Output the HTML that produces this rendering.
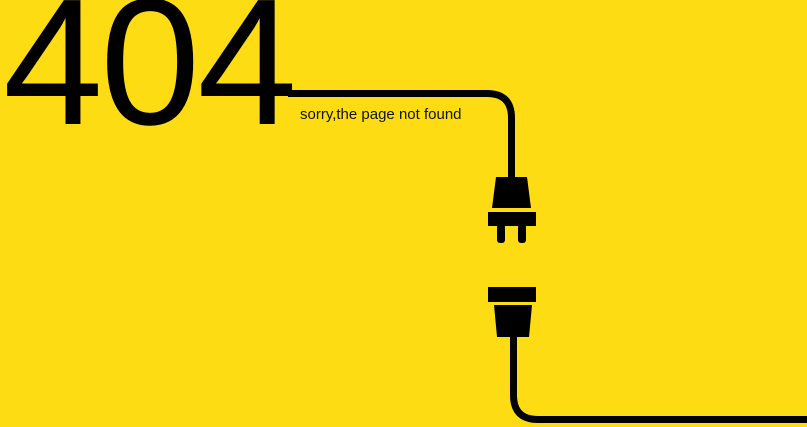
<!DOCTYPE html>
<html><head><style>
html,body{margin:0;padding:0;width:807px;height:427px;overflow:hidden;background:#FEDC14;}
.big{position:absolute;left:3px;top:-27px;font-family:"Liberation Sans",sans-serif;font-size:180px;line-height:1;color:#000;letter-spacing:-3px;}
.msg{position:absolute;left:300px;top:107px;font-family:"Liberation Sans",sans-serif;font-size:15px;line-height:1;color:#111;}
svg{position:absolute;left:0;top:0;}
</style></head><body>
<svg width="807" height="427" viewBox="0 0 807 427">
<path d="M288 93.5 H487 Q511.5 93.5 511.5 118 V180" fill="none" stroke="#000" stroke-width="7"/>
<polygon points="496,177 527,177 531,208 492,208" fill="#000"/>
<rect x="488" y="212" width="48" height="14" fill="#000"/>
<rect x="497" y="224" width="8" height="19" rx="3" fill="#000"/>
<rect x="518" y="224" width="8" height="19" rx="3" fill="#000"/>
<rect x="488" y="287" width="48" height="15" fill="#000"/>
<polygon points="494,305 532,305 529,337 497,337" fill="#000"/>
<path d="M513.5 335 V395 Q513.5 419.5 538 419.5 H807" fill="none" stroke="#000" stroke-width="7"/>
</svg>
<div class="big">404</div>
<div class="msg">sorry,the page not found</div>
</body></html>
